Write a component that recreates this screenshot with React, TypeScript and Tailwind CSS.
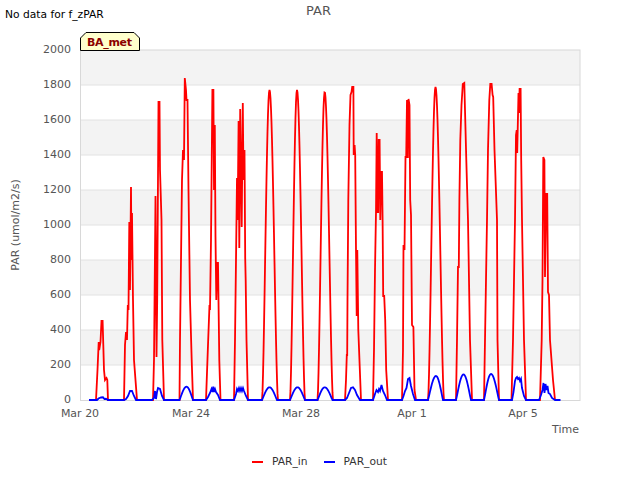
const BANDS = [50, 120, 190, 260, 330];
const GRID = [85, 120, 155, 190, 225, 260, 295, 330, 365];
const Y_TICKS = [2000, 1800, 1600, 1400, 1200, 1000, 800, 600, 400, 200, 0];
const X_TICKS = [
  { x: 80, label: "Mar 20" },
  { x: 191, label: "Mar 24" },
  { x: 301, label: "Mar 28" },
  { x: 412, label: "Apr 1" },
  { x: 523, label: "Apr 5" },
];

type Pt = [number, number];

// one clear day: a bell between left and right, topping out at topY
const hump = (left: number, cx: number, right: number, topY: number, power = 1.6): Pt[] => {
  const pts: Pt[] = [];
  for (let x = left; x <= right + 0.01; x += 0.5) {
    const half = x < cx ? cx - left : right - cx;
    const t = Math.min(Math.abs(x - cx) / half, 1);
    pts.push([x, 400 - (400 - topY) * Math.pow(Math.cos((Math.PI / 2) * t), power)]);
  }
  return pts;
};

const RED: Pt[][] = [
  [[96, 400], [97.5, 370], [98.7, 342], [99.2, 350], [100.5, 342], [101.5, 321], [102.6, 321], [103.3, 345], [104, 370], [105, 380], [106.5, 378], [107.3, 380], [108, 400]],
  [[124, 400], [125, 345], [126, 332], [127, 340], [127.8, 305], [128.5, 310], [129.3, 222], [130, 290], [131, 187], [131.5, 260], [132, 213], [133, 300], [134, 360], [137, 400]],
  [[153, 400], [154, 360], [155.5, 196], [156.5, 357], [157.2, 300], [158.5, 102], [159.5, 102], [160, 170], [161.5, 220], [162.3, 340], [164, 400]],
  [[179.5, 400], [180, 340], [181, 260], [182, 180], [183, 150], [184, 160], [184.8, 78], [186, 90], [186.5, 100], [187.5, 100], [188.5, 190], [190, 300], [191.7, 360], [193, 400]],
  [[206, 400], [208, 345], [209.5, 305], [210, 310], [211, 240], [212.4, 90], [213.4, 90], [214, 190], [214.8, 125], [215.5, 237], [216.3, 300], [217.3, 263], [218, 263], [219.3, 360], [220.5, 400]],
  [[234, 400], [235, 340], [236, 260], [237, 178], [237.6, 220], [238.6, 121], [239.3, 248], [240.2, 109], [241.7, 227], [242.8, 103], [243.5, 180], [244.5, 150], [245.2, 258], [245.7, 281], [246.5, 340], [248, 400]],
  hump(262, 269.5, 278, 90),
  hump(290, 297, 305, 90),
  hump(317.5, 324.7, 333, 92),
  [[345, 400], [346, 380], [346.8, 355], [347.2, 355], [347.5, 300], [348.3, 200], [349.5, 125], [350.5, 95], [351.5, 92], [352.2, 87], [353.4, 87], [353.7, 155], [354.6, 145], [355.2, 155], [356, 250], [356.7, 316], [357.3, 250], [358.3, 330], [361, 400]],
  [[373, 400], [374, 350], [375, 270], [376, 212], [376.7, 133], [377.6, 212], [378.2, 212], [378.7, 140], [379.6, 140], [380.3, 220], [381.2, 172], [382, 172], [382.6, 220], [383.2, 296], [384.2, 296], [385.2, 320], [386.2, 370], [388, 400]],
  [[402, 400], [403, 350], [403.5, 245], [404.5, 250], [405.5, 157], [406.2, 157], [407, 100], [407.9, 158], [408.5, 99], [409.5, 105], [410.2, 200], [411, 215], [412, 325], [413.4, 327], [414.5, 390], [416, 400]],
  hump(428, 435.5, 444, 87),
  [[456, 400], [457, 340], [458, 267], [458.8, 267], [459.4, 200], [460.3, 140], [461.5, 105], [462.8, 84], [464.3, 83], [465, 110], [466.3, 160], [468, 220], [470, 340], [472, 400]],
  [[484, 400], [485, 340], [486, 280], [487, 220], [488, 150], [489.3, 100], [490.3, 84], [491.6, 84], [492.6, 95], [493.2, 97], [494.5, 150], [497, 220], [497.5, 340], [499, 400]],
  [[511.5, 400], [513, 340], [514, 280], [515, 220], [516, 135], [516.7, 130], [517.2, 153], [518.5, 93], [519, 113], [519.6, 89], [520.6, 89], [521.2, 160], [522, 220], [524, 340], [526, 400]],
  [[540, 400], [541.7, 340], [542.5, 280], [543.3, 157], [544.4, 160], [545, 277], [546.2, 194], [547.2, 194], [548, 292], [549, 295], [550, 340], [553, 380], [555, 400]],
];

const BLUE: Pt[][] = [
  [[89, 400], [97, 400], [98.5, 398.5], [101, 397.5], [103, 397.3], [104.5, 399], [106, 398.8], [108, 400]],
  [[124, 400], [126, 399], [128, 396], [130, 391], [132, 391], [134, 396], [136, 400]],
  [[152, 400], [154, 398], [155, 391], [156, 399], [157, 392], [158, 388], [160, 389], [162, 396], [164, 400]],
  hump(179.5, 186.5, 193, 386.7, 1.1),
  [[206, 400], [208, 397], [210, 393], [211.5, 389], [212.5, 392], [213.2, 386.7], [214, 392], [215, 389], [216, 392], [218, 395], [220, 400]],
  [[234, 400], [236, 394], [237, 389], [238, 391], [239, 388], [240, 391], [241, 388], [242, 391], [243, 388], [244, 391], [246, 396], [248, 400]],
  hump(262, 269.5, 277, 387.3, 1.1),
  hump(290, 297.5, 305, 387.3, 1.1),
  hump(317.5, 324.7, 332.5, 387.3, 1.1),
  [[345, 400], [347, 398], [349, 393], [351, 388], [353, 387.3], [355, 390], [357, 395], [360, 400]],
  [[373, 400], [375, 394], [376.5, 390], [378, 392], [379, 389], [380, 391], [381.5, 385], [383, 391], [385, 395], [387, 400]],
  [[402, 400], [403.5, 396], [405, 391], [406.5, 388], [408, 379], [409.5, 378], [411, 386], [413, 394], [415, 400]],
  hump(428, 436, 443, 376, 1.1),
  hump(456, 463.5, 471, 374.5, 1.1),
  hump(484, 491, 499, 374, 1.1),
  [[512, 400], [513.5, 392], [515, 381], [516, 378], [517, 377], [518, 379], [519, 378], [520, 381], [521, 379], [522, 388], [524, 396], [526, 400]],
  [[539, 400], [541, 395], [542.5, 390], [543.5, 383], [544.5, 393], [545.5, 384], [546.5, 390], [547.5, 386], [548.5, 393], [550, 394], [552, 398], [555, 400], [560.5, 400]],
];

const toPath = (pts: Pt[]) => pts.map(([x, y]) => `${x},${y}`).join(" ");

export default function App() {
  return (
    <div className="flex h-[480px] w-[640px] flex-col overflow-hidden bg-white font-['DejaVu_Sans',sans-serif] text-[11px] text-[#555555]">
      {/* header */}
      <div className="flex h-6 shrink-0">
        <div className="w-[306px] pl-[5px] pt-[8px] text-[10.7px] leading-[13px] text-black">No data for f_zPAR</div>
        <div className="pt-[3px] text-[13px] leading-[15px]">PAR</div>
      </div>

      {/* chart */}
      <svg viewBox="0 24 640 421" className="h-[421px] w-[640px] shrink-0" fontSize="11" fill="#555555">
        {BANDS.map((y) => (
          <rect key={y} x="80" y={y} width="500" height="35" fill="#f3f3f3" />
        ))}
        {GRID.map((y) => (
          <line key={y} x1="80" x2="580" y1={y} y2={y} stroke="#e2e2e2" strokeWidth="1" />
        ))}
        <rect x="80.5" y="50" width="499.5" height="350.5" fill="none" stroke="#d8d8d8" strokeWidth="1" />

        <polyline points={toPath(RED.flat())} fill="none" stroke="#ff0000" strokeWidth="1.8" />
        <polyline points={toPath(BLUE.flat())} fill="none" stroke="#0000ff" strokeWidth="1.8" />

        {/* BA_met tag */}
        <polygon points="80.5,50.5 80.5,38 86,32.5 134,32.5 139.5,38 139.5,50.5" fill="#ffffcc" stroke="#000000" />
        <text x="87" y="46" fontWeight="700" fill="#8b0000" textLength="45">BA_met</text>

        {Y_TICKS.map((v) => (
          <text key={v} x="71" y={403 - v * 0.175} textAnchor="end">{v}</text>
        ))}
        {X_TICKS.map((t) => (
          <text key={t.label} x={t.x} y="417" textAnchor="middle">{t.label}</text>
        ))}
        <text x="579" y="433" textAnchor="end">Time</text>
        <text x="0" y="0" textAnchor="middle" transform="translate(19 225) rotate(-90)">PAR (umol/m2/s)</text>
      </svg>

      {/* legend */}
      <div className="mt-[10px] flex items-center pl-[252px] text-[10.7px] leading-[13px] text-[#333333]">
        <span className="h-[2px] w-[11px] bg-[#ff0000]" />
        <span className="ml-[9px]">PAR_in</span>
        <span className="ml-[16px] h-[2px] w-[11px] bg-[#0000ff]" />
        <span className="ml-[9px]">PAR_out</span>
      </div>
    </div>
  );
}
